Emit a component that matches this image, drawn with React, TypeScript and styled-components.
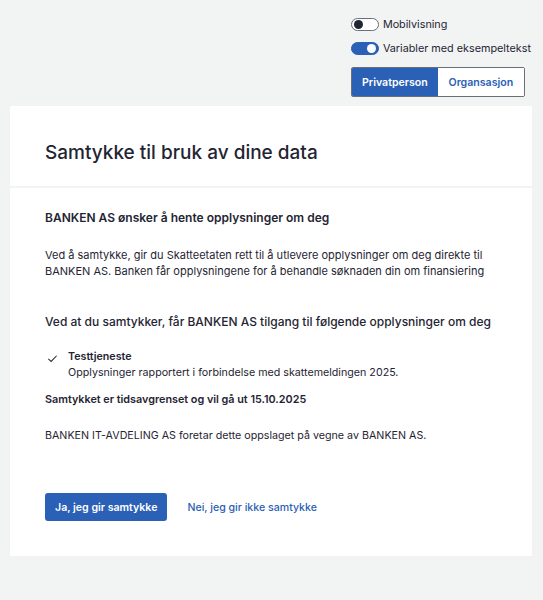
import styled, { createGlobalStyle } from "styled-components";

const blue = "#2a60b5";
const text = "#1f2533";

const GlobalStyle = createGlobalStyle`
  html, body {
    margin: 0;
    padding: 0;
    background: #f2f3f3;
    font-family: Inter, "Noto Sans", sans-serif;
    color: ${text};
  }
`;

export default function App() {
  return (
    <>
      <GlobalStyle />
      <Page>
        <Controls>
          <ToggleRow>
            <Toggle $on={false} />
            <ToggleLabel>Mobilvisning</ToggleLabel>
          </ToggleRow>
          <ToggleRow>
            <Toggle $on />
            <ToggleLabel>Variabler med eksempeltekst</ToggleLabel>
          </ToggleRow>
          <Segmented>
            <Segment $active>Privatperson</Segment>
            <Segment>Organsasjon</Segment>
          </Segmented>
        </Controls>
        <Card>
          <CardHeader>
            <Title>Samtykke til bruk av dine data</Title>
          </CardHeader>
          <CardBody>
            <Heading>BANKEN AS ønsker å hente opplysninger om deg</Heading>
            <Paragraph>
              Ved å samtykke, gir du Skatteetaten rett til å utlevere opplysninger om deg direkte til
              BANKEN AS. Banken får opplysningene for å behandle søknaden din om finansiering
            </Paragraph>
            <SubTitle>Ved at du samtykker, får BANKEN AS tilgang til følgende opplysninger om deg</SubTitle>
            <ItemList>
              <Item>
                <Check viewBox="0 0 12 12">
                  <path d="M1.5 6.5 L4.5 9.2 L10.5 3" fill="none" stroke={text} strokeWidth="1.1" />
                </Check>
                <div>
                  <ItemTitle>Testtjeneste</ItemTitle>
                  <ItemText>Opplysninger rapportert i forbindelse med skattemeldingen 2025.</ItemText>
                </div>
              </Item>
            </ItemList>
            <Expiry>Samtykket er tidsavgrenset og vil gå ut 15.10.2025</Expiry>
            <Note>BANKEN IT-AVDELING AS foretar dette oppslaget på vegne av BANKEN AS.</Note>
            <Actions>
              <PrimaryButton>Ja, jeg gir samtykke</PrimaryButton>
              <LinkButton>Nei, jeg gir ikke samtykke</LinkButton>
            </Actions>
          </CardBody>
        </Card>
      </Page>
    </>
  );
}

const Page = styled.div`
  padding: 18px 11px 44px 10px;
  display: flex;
  flex-direction: column;
`;

const Controls = styled.div`
  align-self: flex-end;
  display: flex;
  flex-direction: column;
  align-items: flex-start;
  gap: 11px;
  margin-bottom: 9px;
  margin-right: 1px;
`;

const ToggleRow = styled.div`
  display: flex;
  align-items: center;
  gap: 4px;
  height: 13px;
`;

const Toggle = styled.span<{ $on?: boolean }>`
  position: relative;
  box-sizing: border-box;
  width: 28px;
  height: 13px;
  border-radius: 7px;
  border: 1px solid ${(p) => (p.$on ? blue : "#6b6f78")};
  background: ${(p) => (p.$on ? blue : "#fff")};

  &::after {
    content: "";
    position: absolute;
    top: 1px;
    left: ${(p) => (p.$on ? "15px" : "2px")};
    width: 9px;
    height: 9px;
    border-radius: 50%;
    background: ${(p) => (p.$on ? "#fff" : "#1f2533")};
  }
`;

const ToggleLabel = styled.span`
  font-size: 10.8px;
  color: ${text};
`;

const Segmented = styled.div`
  display: flex;
  box-sizing: border-box;
  height: 30px;
  border: 1px solid #6b6f78;
  border-radius: 2px;
  overflow: hidden;
  margin-top: 1px;
`;

const Segment = styled.button<{ $active?: boolean }>`
  border: none;
  width: 86px;
  padding: 0;
  font-family: inherit;
  font-size: 10.6px;
  font-weight: 600;
  background: ${(p) => (p.$active ? blue : "#fff")};
  color: ${(p) => (p.$active ? "#fff" : blue)};
  cursor: pointer;
`;

const Card = styled.div`
  background: #fff;
  display: flex;
  flex-direction: column;
  gap: 2px;
  background-image: linear-gradient(#f2f3f3, #f2f3f3);
  background-repeat: no-repeat;
  background-size: 100% 2px;
  background-position: 0 80px;
`;

const CardHeader = styled.div`
  height: 80px;
  display: flex;
  align-items: center;
  padding: 0 35px;
  box-sizing: border-box;
`;

const Title = styled.h1`
  margin: 12px 0 0;
  font-size: 19px;
  font-weight: 500;
  color: ${text};
`;

const CardBody = styled.div`
  padding: 21px 35px 35px;
  display: flex;
  flex-direction: column;
`;

const Heading = styled.h2`
  margin: 0;
  font-size: 12px;
  font-weight: 600;
  line-height: 18px;
`;

const Paragraph = styled.p`
  margin: 20px 0 0;
  font-size: 11px;
  line-height: 16px;
`;

const SubTitle = styled.h3`
  margin: 33px 0 0;
  font-size: 12px;
  font-weight: 500;
  line-height: 20px;
  white-space: nowrap;
`;

const ItemList = styled.div`
  margin-top: 17px;
`;

const Item = styled.div`
  display: flex;
  align-items: flex-start;
  gap: 10px;
  padding-left: 2px;
`;

const Check = styled.svg`
  width: 11px;
  height: 11px;
  margin-top: 4px;
  flex-shrink: 0;
`;

const ItemTitle = styled.div`
  font-size: 10.7px;
  font-weight: 600;
  line-height: 16px;
`;

const ItemText = styled.div`
  font-size: 10.7px;
  line-height: 16px;
`;

const Expiry = styled.div`
  margin-top: 11px;
  font-size: 10.8px;
  font-weight: 600;
  line-height: 16px;
`;

const Note = styled.p`
  margin: 20px 0 0;
  font-size: 10.7px;
  line-height: 16px;
`;

const Actions = styled.div`
  margin-top: 49px;
  display: flex;
  align-items: center;
  gap: 20px;
`;

const PrimaryButton = styled.button`
  height: 28px;
  padding: 0 10px;
  border: none;
  border-radius: 3px;
  background: ${blue};
  color: #fff;
  font-family: inherit;
  font-size: 10.6px;
  font-weight: 600;
  cursor: pointer;
`;

const LinkButton = styled.button`
  border: none;
  background: none;
  padding: 0;
  color: ${blue};
  font-family: inherit;
  font-size: 10.6px;
  font-weight: 500;
  cursor: pointer;
`;
